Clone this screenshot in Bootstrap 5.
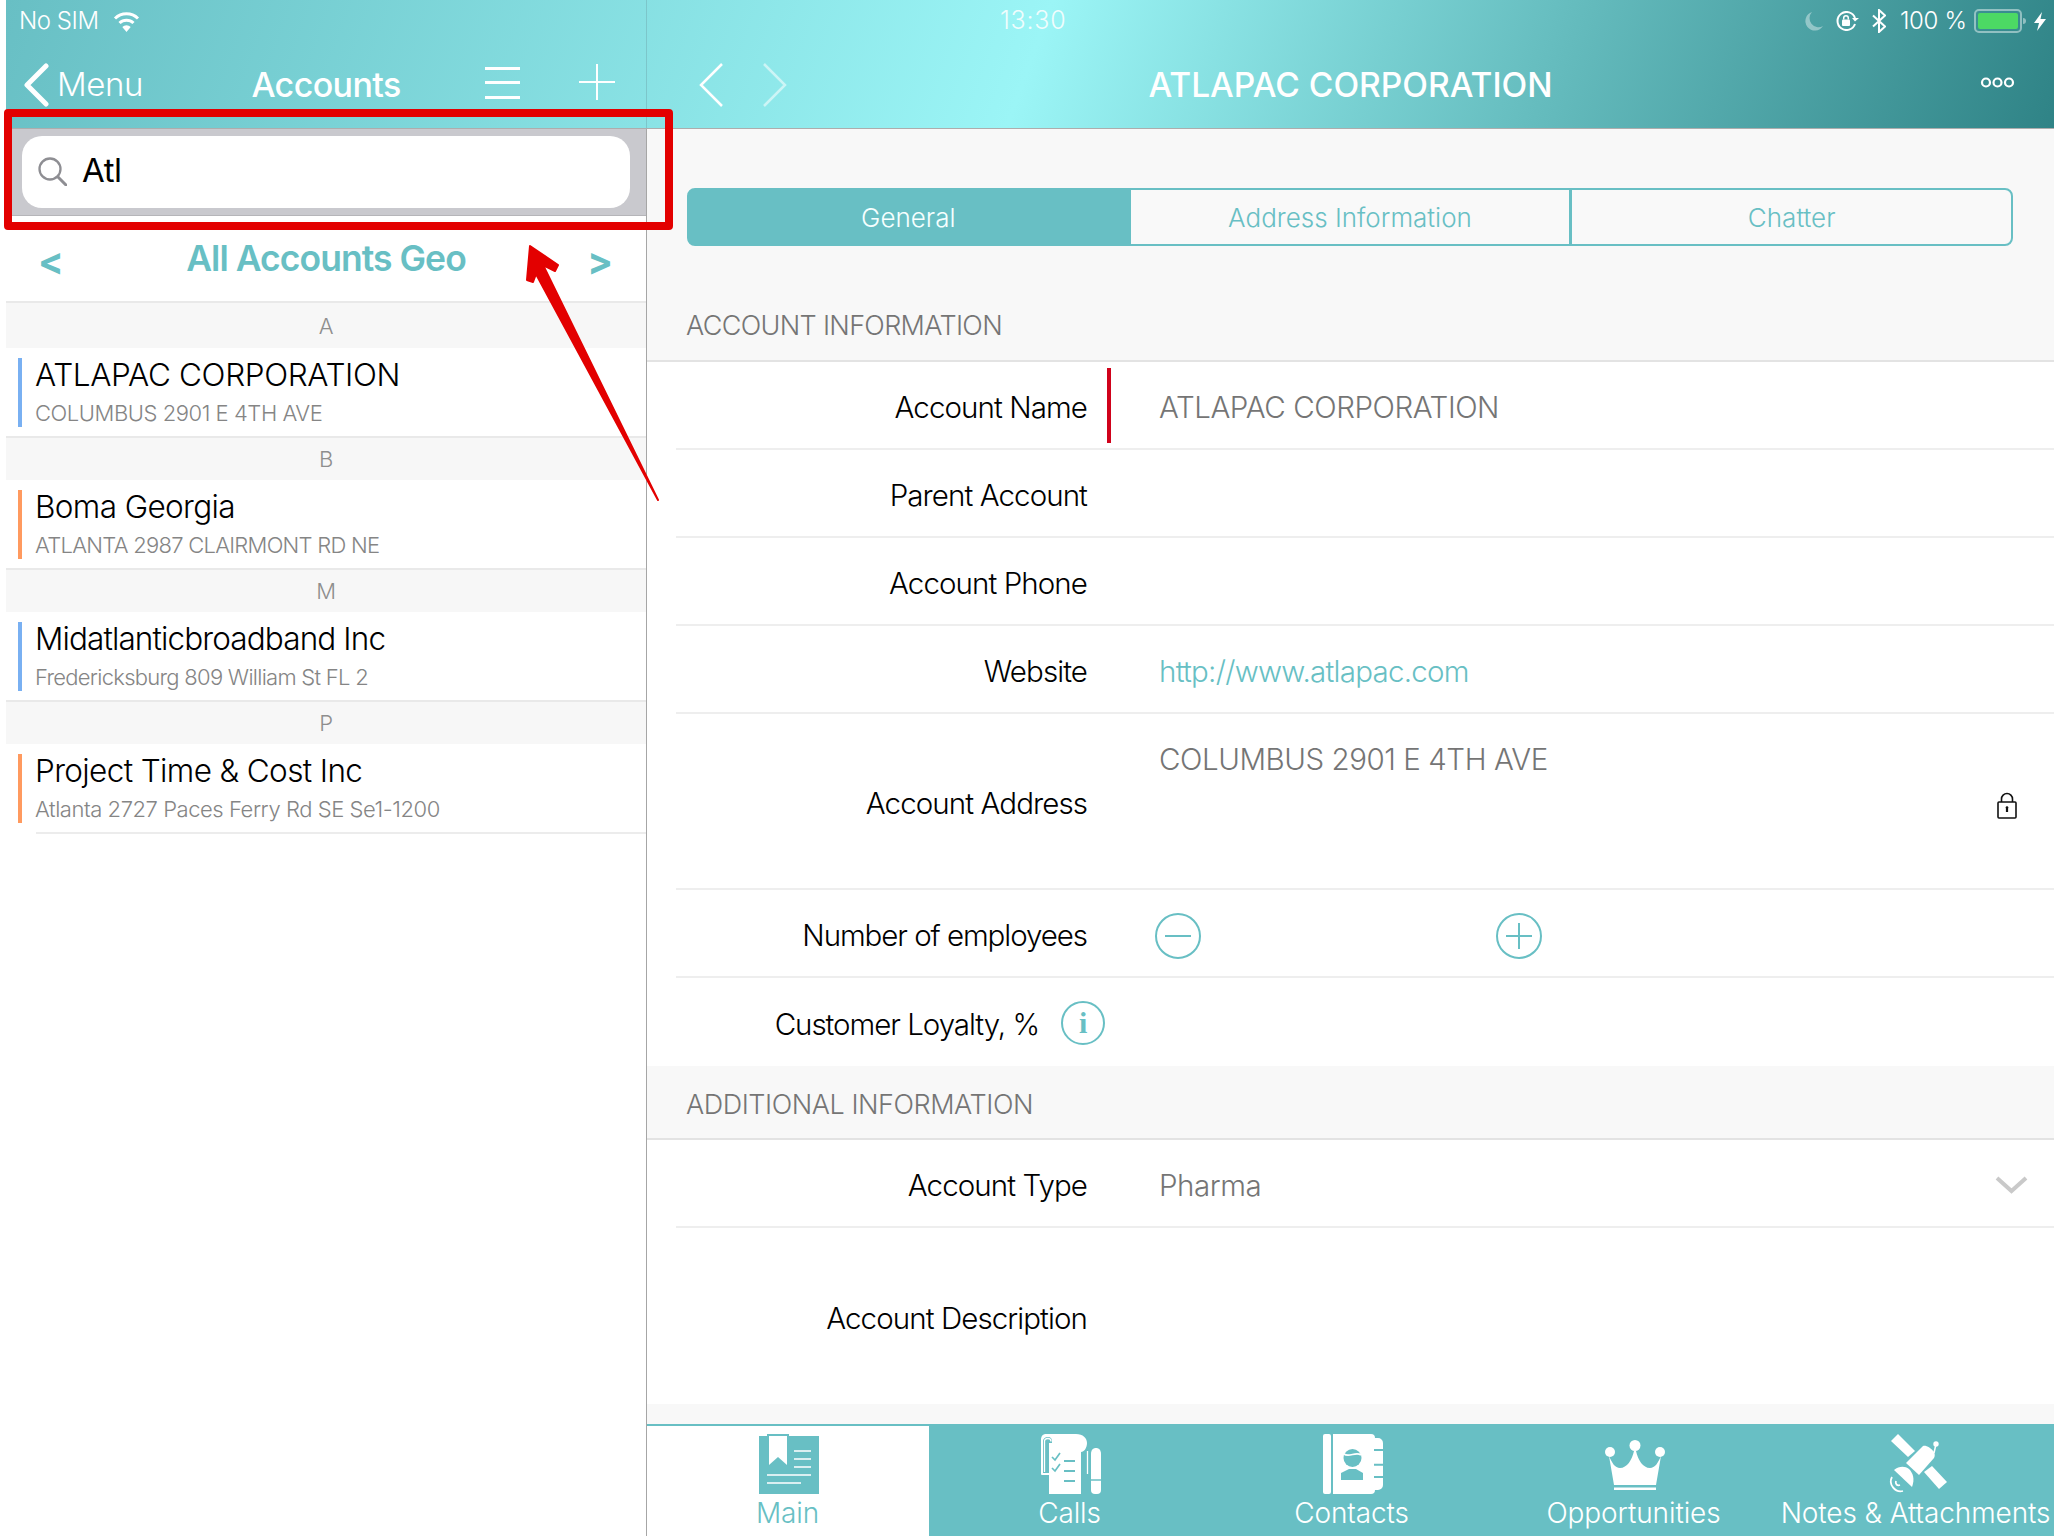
<!DOCTYPE html>
<html lang="en">
<head>
<meta charset="utf-8">
<title>Accounts</title>
<link href="https://cdn.jsdelivr.net/npm/bootstrap@5.3.0/dist/css/bootstrap.min.css" rel="stylesheet">
<style>
:root{--teal:#68bfc4;--lt:-.028em}
html,body{height:100%}
body{background:#fff;font-family:Inter,"Liberation Sans",sans-serif;font-weight:300;color:#000;letter-spacing:var(--lt);overflow:hidden}
.app{position:relative;width:2054px;height:1536px;padding-left:6px;display:flex;flex-direction:column}
.topbar{height:129px;display:flex;flex:none;background:linear-gradient(110deg,#68bfc4 0%,#9bf5f6 50%,#2f8386 100%);border-bottom:1px solid #adadad;color:#fff}
.top-l{width:640px;flex:none;display:flex;flex-direction:column}
.top-r{flex:1;display:flex;flex-direction:column;border-left:1px solid #7cc6ca;position:relative}
.status{height:42px;display:flex;align-items:center;font-size:23.500px;flex:none}
.navline{flex:1;display:flex;align-items:center;position:relative;font-size:33px}
.nosim{padding-left:13px;font-size:24px}
.wifi{margin-left:14px}
.backc{margin-left:17px}
.menu-t{margin-left:8px}
.acc-t{position:absolute;left:0;right:0;text-align:center;font-weight:500;font-size:34px;letter-spacing:-.018em;padding-bottom:2px}
.hamb{position:absolute;left:479px;top:25px}
.plus{position:absolute;left:573px;top:22px}
.clock{padding-left:353px;opacity:.85;font-size:25px;letter-spacing:.03em}
.st-right{position:absolute;right:8px;top:3px;display:flex;align-items:center}
.st-gap{margin-left:13px}
.st-pct{font-size:24px;margin-left:14px;width:68px;white-space:nowrap;letter-spacing:-.015em}
.st-bat{margin-left:6px}
.chev-l{position:absolute;left:51px;top:21px}
.chev-r{position:absolute;left:115px;top:21px}
.rec-title{width:100%;text-align:center;font-weight:500;font-size:33.500px;letter-spacing:0;padding-right:0}
.dots{position:absolute;right:39px;top:35px}
.panels{flex:1;display:flex;min-height:0}
.left-p{width:640px;flex:none;display:flex;flex-direction:column}
.right-p{flex:1;border-left:1px solid #a6a6a6;background:#f8f8f8;display:flex;flex-direction:column;min-width:0}
.searchband{height:87px;background:#c9c9ce;border-bottom:1px solid #b5b5b9;padding:7px 16px 0 16px;flex:none}
.searchin{height:72px;background:#fff;border-radius:20px;display:flex;align-items:center;padding-left:16px;font-size:33px;font-weight:400;padding-bottom:2px}
.searchin svg{margin-right:15px;flex:none}
.listtitle{height:87px;flex:none;display:flex;align-items:center;justify-content:space-between;padding:0 33px 0 32px;color:var(--teal);border-bottom:2px solid #e9e9e9;position:relative}
.listtitle b{font-size:38px;font-weight:700;margin-top:6px;letter-spacing:0}
.listtitle span{font-size:35.500px;font-weight:600;text-align:center;position:absolute;left:0;right:0;letter-spacing:-.027em;margin-top:1px}
.sect{height:42px;background:#f7f7f7;text-align:center;color:#8e8e8e;font-size:22px;line-height:42px;flex:none}
.sect.firsts{height:45px;line-height:46px}
.acct{height:88px;background:#fff;padding:10px 0 0 12px;display:flex;flex:none}
.acct-bar{width:4px;height:69px;flex:none}
.acct-txt{margin-left:13px;line-height:1}
.acct-n{font-size:31.500px;line-height:30px;margin-top:2px;letter-spacing:-.02em}
.acct-n.capsn{letter-spacing:-.012em}
.acct-n.snug{letter-spacing:-.028em}
.acct-s{font-size:22px;color:#858585;line-height:26px;margin-top:10px}
.acct-s.snug{letter-spacing:-.033em}
.sep2{height:2px;background:#e9e9e9;flex:none}
.sep3{height:2px;background:#ececec;margin-left:30px;flex:none}
.form-a{flex:1;min-height:0;display:flex;flex-direction:column}
.segwrap{padding:59px 41px 0 40px;height:176px;flex:none}
.btn-group>.segbtn{--bs-btn-border-color:var(--teal);--bs-btn-color:var(--teal);--bs-btn-bg:#f9f9f9;--bs-btn-border-width:2px;--bs-btn-border-radius:8px;--bs-btn-hover-bg:#f9f9f9;--bs-btn-hover-color:var(--teal);--bs-btn-hover-border-color:var(--teal);--bs-btn-font-size:26px;--bs-btn-font-weight:300;height:58px;display:flex;align-items:center;justify-content:center;flex:1 1 0;width:0;letter-spacing:0;padding:0}
.btn-group>.segbtn.on{background:var(--teal);color:#f6ffff}
.secthead{height:55px;padding-left:39px;color:#757575;font-size:27px;line-height:41px;flex:none;letter-spacing:-.025em}
.secthead2{height:74px;padding-left:39px;color:#757575;font-size:27px;line-height:77px;flex:none;border-bottom:2px solid #e3e3e3}
.sec-line{height:2px;background:#e3e3e3;flex:none}
.rows{background:#fff;flex:none}
.frow{height:88px;display:flex;align-items:center;position:relative;font-size:29.500px;margin-left:29px;border-bottom:2px solid #eee;padding-top:5px}
.frow.tall{height:176px}
.frow.last{height:176px;margin-left:0;border:0;padding-left:29px}
.frow.nob{border:0}
.lab{width:411px;text-align:right;flex:none;letter-spacing:-.031em}
.lab.short{width:363px;letter-spacing:-.035em}
.lab.snugl{letter-spacing:-.036em}
.gut{width:72px;flex:none;align-self:stretch;display:flex;align-items:center}
.redb{width:4px;height:75px;background:#d0021b;margin:-5px 0 0 20px}
.val{color:#757575}
.val.top{align-self:flex-start;margin-top:18px}
.lnk{color:var(--teal);text-decoration:none;letter-spacing:-.025em}
.lockic{position:absolute;right:37px;top:78px}
.chevd{position:absolute;right:26px;top:36px}
.stepper{display:flex;gap:295px;margin-left:-4px}
.infoic{margin:-4px 0 0 22px}
.fillgap{height:20px;flex:none}
.tabs-b{height:112px;background:var(--teal);display:flex;flex:none}
.tabi{flex:0 0 282px;min-width:0;display:flex;flex-direction:column;align-items:center;color:#fff;padding:10px 0 0 2px;font-size:28px;white-space:nowrap;letter-spacing:-.004em;font-weight:300}
.tabi.on{background:#fff;color:var(--teal);margin-top:2px;padding-top:8px}
.tabi svg{height:60px;flex:none}
.tabi span{line-height:36px;margin:1px 0 0 -3px}
.callout{position:absolute;left:4px;top:109px;width:669px;height:121px;border:8px solid #e30000;border-radius:4px;pointer-events:none}
.arrow{position:absolute;left:0;top:0;pointer-events:none}
</style>
</head>
<body>
<div class="app">
  <div class="topbar">
    <div class="top-l">
      <div class="status nosim">No SIM
        <svg class="wifi" width="27" height="21" viewBox="0 0 27 21" fill="none" stroke="#fff" stroke-width="3"><path d="M2 7.500a16.500 16.500 0 0 1 23 0"/><path d="M6.500 12a10 10 0 0 1 14 0"/><path d="M13.500 21l-4.200-5a6 6 0 0 1 8.400 0z" fill="#fff" stroke="none"/></svg>
      </div>
      <div class="navline">
        <svg class="backc" width="26" height="44" viewBox="0 0 26 44" fill="none" stroke="#fff" stroke-width="5" stroke-linecap="round" stroke-linejoin="round"><path d="M23 3L4 22l19 19"/></svg>
        <span class="menu-t">Menu</span>
        <span class="acc-t">Accounts</span>
        <svg class="hamb" width="35" height="32" viewBox="0 0 35 32" fill="#fff"><rect y="0" width="35" height="3"/><rect y="14" width="35" height="3"/><rect y="29" width="35" height="3"/></svg>
        <svg class="plus" width="36" height="36" viewBox="0 0 36 36" fill="#fff"><rect y="17" width="36" height="2"/><rect x="17" width="2" height="36"/></svg>
      </div>
    </div>
    <div class="top-r">
      <div class="status"><span class="clock">13:30</span></div>
      <div class="st-right">
        <svg width="18" height="19" viewBox="0 0 18 19" fill="#fff" fill-opacity=".4"><path d="M7 0a9.500 9.500 0 1 0 11 14A9 9 0 0 1 7 0z"/></svg>
        <svg class="st-gap" width="23" height="20" viewBox="0 0 23 20" fill="none" stroke="#fff" stroke-width="2"><path d="M19 13a9 9 0 1 1 0-6"/><path d="M23 7l-4 3.500L16 7z" fill="#fff" stroke="none"/><rect x="6" y="8.500" width="8" height="6.500" rx="1" fill="#fff" stroke="none"/><path d="M7.700 8.500V7a2.300 2.300 0 0 1 4.600 0v1.500" stroke-width="1.500"/></svg>
        <svg class="st-gap" width="14" height="24" viewBox="0 0 14 24" fill="none" stroke="#fff" stroke-width="2"><path d="M1 6.500l12 11-6 5.500V1l6 5.500-12 11"/></svg>
        <span class="st-pct">100 %</span>
        <svg class="st-bat" width="54" height="24" viewBox="0 0 54 24"><rect x="1" y="1" width="46" height="22" rx="4" fill="none" stroke="#fff" stroke-opacity=".45" stroke-width="2"/><rect x="4" y="4" width="40" height="16" rx="2" fill="#4cd964"/><path d="M49 9c2 0 3 1 3 3s-1 3-3 3z" fill="#fff" fill-opacity=".45"/></svg>
        <svg class="st-bat" width="12" height="19" viewBox="0 0 12 19" fill="#fff"><path d="M8 0L0 11h5l-2 8 9-12H6.500z"/></svg>
      </div>
      <div class="navline">
        <svg class="chev-l" width="26" height="44" viewBox="0 0 26 44" fill="none" stroke="#fff" stroke-width="2.500"><path d="M24 1L3 22l21 21"/></svg>
        <svg class="chev-r" width="26" height="44" viewBox="0 0 26 44" fill="none" stroke="#fff" stroke-opacity=".55" stroke-width="2.500"><path d="M2 1l21 21L2 43"/></svg>
        <span class="rec-title">ATLAPAC CORPORATION</span>
        <svg class="dots" width="35" height="11" viewBox="0 0 35 11" fill="none" stroke="#fff" stroke-width="2.200"><circle cx="6" cy="5.500" r="4"/><circle cx="17.500" cy="5.500" r="4"/><circle cx="29" cy="5.500" r="4"/></svg>
      </div>
    </div>
  </div>

  <div class="panels">
    <div class="left-p">
      <div class="searchband">
        <div class="searchin">
          <svg width="29" height="29" viewBox="0 0 29 29" fill="none" stroke="#8e8e93" stroke-width="2.300"><circle cx="12" cy="12" r="10.500"/><path d="M20 20l8 8" stroke-linecap="round" stroke-width="3"/></svg>
          Atl
        </div>
      </div>
      <div class="listtitle"><b>&lt;</b><span>All Accounts Geo</span><b>&gt;</b></div>
      <div class="sect firsts">A</div>
      <div class="acct"><div class="acct-bar" style="background:#79b0f2"></div><div class="acct-txt"><div class="acct-n capsn">ATLAPAC CORPORATION</div><div class="acct-s">COLUMBUS 2901 E 4TH AVE</div></div></div>
      <div class="sep2"></div>
      <div class="sect">B</div>
      <div class="acct"><div class="acct-bar" style="background:#ff9a5f"></div><div class="acct-txt"><div class="acct-n">Boma Georgia</div><div class="acct-s snug">ATLANTA 2987 CLAIRMONT RD NE</div></div></div>
      <div class="sep2"></div>
      <div class="sect">M</div>
      <div class="acct"><div class="acct-bar" style="background:#79b0f2"></div><div class="acct-txt"><div class="acct-n snug">Midatlanticbroadband Inc</div><div class="acct-s snug">Fredericksburg 809 William St FL 2</div></div></div>
      <div class="sep2"></div>
      <div class="sect">P</div>
      <div class="acct"><div class="acct-bar" style="background:#ff9a5f"></div><div class="acct-txt"><div class="acct-n">Project Time &amp; Cost Inc</div><div class="acct-s">Atlanta 2727 Paces Ferry Rd SE Se1-1200</div></div></div>
      <div class="sep3"></div>
    </div>

    <div class="right-p">
      <div class="form-a">
        <div class="segwrap">
          <div class="btn-group w-100" role="group">
            <button type="button" class="btn segbtn on">General</button>
            <button type="button" class="btn segbtn">Address Information</button>
            <button type="button" class="btn segbtn">Chatter</button>
          </div>
        </div>
        <div class="secthead">ACCOUNT INFORMATION</div>
        <div class="sec-line"></div>
        <div class="rows">
          <div class="frow"><div class="lab">Account Name</div><div class="gut"><div class="redb"></div></div><div class="val">ATLAPAC CORPORATION</div></div>
          <div class="frow"><div class="lab">Parent Account</div></div>
          <div class="frow"><div class="lab">Account Phone</div></div>
          <div class="frow"><div class="lab">Website</div><div class="gut"></div><a class="lnk" href="#">http://www.atlapac.com</a></div>
          <div class="frow tall"><div class="lab">Account Address</div><div class="gut"></div><div class="val top">COLUMBUS 2901 E 4TH AVE</div>
            <svg class="lockic" width="20" height="27" viewBox="0 0 20 27" fill="none" stroke="#111" stroke-width="1.600"><rect x="1" y="10" width="18" height="16" rx="1"/><path d="M4.500 10V7a5.500 5.500 0 0 1 11 0v3"/><path d="M10 15v5" stroke-width="2.200"/><circle cx="10" cy="15.500" r="1.300" fill="#111" stroke="none"/></svg>
          </div>
          <div class="frow"><div class="lab snugl">Number of employees</div><div class="gut"></div>
            <div class="stepper">
              <svg width="46" height="46" viewBox="0 0 46 46" fill="none" stroke="#68bfc4" stroke-width="2"><circle cx="23" cy="23" r="22"/><path d="M10 23h26"/></svg>
              <svg width="46" height="46" viewBox="0 0 46 46" fill="none" stroke="#68bfc4" stroke-width="2"><circle cx="23" cy="23" r="22"/><path d="M10 23h26M23 10v26"/></svg>
            </div>
          </div>
          <div class="frow nob"><div class="lab short">Customer Loyalty, %</div>
            <svg class="infoic" width="44" height="44" viewBox="0 0 44 44" fill="none" stroke="#68bfc4" stroke-width="2"><circle cx="22" cy="22" r="21"/><text x="22" y="32" text-anchor="middle" font-family="Liberation Serif,serif" font-size="30" font-weight="700" fill="#68bfc4" stroke="none">i</text></svg>
          </div>
        </div>
        <div class="secthead2">ADDITIONAL INFORMATION</div>
        <div class="rows">
          <div class="frow"><div class="lab">Account Type</div><div class="gut"></div><div class="val">Pharma</div>
            <svg class="chevd" width="33" height="18" viewBox="0 0 33 18" fill="none" stroke="#c9c9c9" stroke-width="4"><path d="M2 2l14.500 13L31 2"/></svg>
          </div>
          <div class="frow last"><div class="lab">Account Description</div></div>
        </div>
        <div class="fillgap"></div>
        <div class="tabs-b">
          <div class="tabi on">
            <svg width="60" height="60" viewBox="0 0 60 60"><path d="M0 2h8V0h22v2h30v58H0z" fill="#68bfc4"/><path d="M10 2h18v29l-9-8-9 8z" fill="#fff"/><path d="M35 17h17M35 25h17M35 33h17M8 41h44M8 49h34" stroke="#fff" stroke-width="1.500"/></svg>
            <span>Main</span>
          </div>
          <div class="tabi">
            <svg width="60" height="60" viewBox="0 0 60 60" fill="#fff"><path d="M5 0h30c7 0 11 4 11 9s-3 9-6 9v42H8V41H1a1 1 0 0 1-1-1V6c0-4 2-6 5-6z"/><path d="M2 39V7c0-2 2-4 5-4s4 2 4 4v2H8v30z" fill="#68bfc4"/><path d="M3.500 38V7.500C3.500 5.500 5 4.500 7 4.500s3 1 3 3" fill="none" stroke="#fff" stroke-width="1.300"/><path d="M11 23l3 3 5-7M11 34l3 3 5-7" fill="none" stroke="#68bfc4" stroke-width="1.700"/><path d="M23 27h11M23 37h11M23 47h11" stroke="#68bfc4" stroke-width="2"/><path d="M50 20c0-4 2-6 5-6s5 2 5 6v36a4 4 0 0 1-4 4h-2a4 4 0 0 1-4-4z"/><path d="M50 46h10" stroke="#68bfc4" stroke-width="1.500"/><path d="M46.500 17v23" stroke="#fff" stroke-width="1.300"/></svg>
            <span>Calls</span>
          </div>
          <div class="tabi">
            <svg width="60" height="60" viewBox="0 0 60 60" fill="#fff"><rect width="8" height="60" rx="2"/><path d="M10 0h38a4 4 0 0 1 4 4h3a5 5 0 0 1 5 5v42a5 5 0 0 1-5 5h-3a4 4 0 0 1-4 4H10z"/><path d="M51 16h9M51 30.700h9M51 43h9" stroke="#68bfc4" stroke-width="2"/><circle cx="29.500" cy="24" r="9" fill="#68bfc4"/><path d="M21 20c5 4 12-3 17 1" fill="none" stroke="#fff" stroke-width="1.800"/><path d="M18 46v-7l8-4h7l7 4v7z" fill="#68bfc4"/></svg>
            <span>Contacts</span>
          </div>
          <div class="tabi">
            <svg width="60" height="60" viewBox="0 -6 60 60" fill="#fff"><circle cx="5" cy="12" r="5"/><circle cx="30" cy="5.500" r="5.500"/><circle cx="55" cy="12" r="5"/><path d="M4 16c3 7 6 12 11 12 7 0 12-8 14-17h2c2 9 7 17 14 17 5 0 8-5 11-12l-5 29H9z"/><rect x="9" y="47.500" width="42" height="2.500"/></svg>
            <span>Opportunities</span>
          </div>
          <div class="tabi">
            <svg width="60" height="60" viewBox="0 0 60 60" fill="#fff"><path d="M4 7l7-7 17 17-7 6z"/><path d="M19 29l17-17c3-1 8 2 11 6 1 2 1 4 0 6L32 41z"/><circle cx="49" cy="10" r="2.700"/><path d="M47 19l2-9" stroke="#fff" stroke-width="1.500"/><path d="M37 38l8-6 15 16-8 7z"/><path d="M7 36c5-4 11-4 15-1 4 4 6 10 3 18z"/><path d="M5 43c-4 7 3 16 11 14M9 47c-1 3 1 5 4 4" fill="none" stroke="#fff" stroke-width="1.800"/></svg>
            <span>Notes &amp; Attachments</span>
          </div>
        </div>
      </div>
    </div>
  </div>

  <div class="callout"></div>
  <svg class="arrow" width="2054" height="1536" viewBox="0 0 2054 1536"><path d="M530 246L558 265 555 271 543 265 658 500 536 274 533 282 527 280z" fill="#e30000" stroke="#e30000" stroke-width="2" stroke-linejoin="round"/></svg>
</div>
<script src="https://cdn.jsdelivr.net/npm/bootstrap@5.3.0/dist/js/bootstrap.bundle.min.js"></script>
</body>
</html>
